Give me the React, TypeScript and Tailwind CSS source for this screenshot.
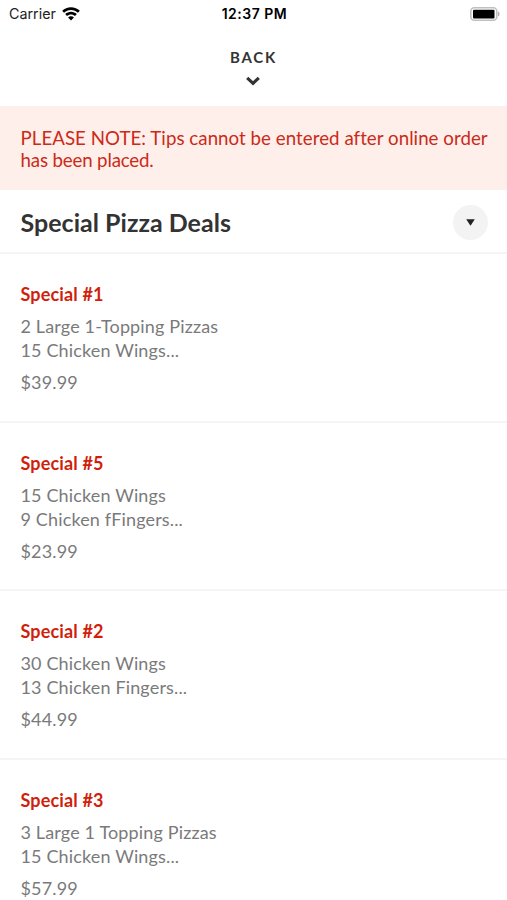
import { ReactNode } from 'react'

interface Deal {
  name: string
  lines: string[]
  price: string
}

const deals: Deal[] = [
  { name: 'Special #1', lines: ['2 Large 1-Topping Pizzas', '15 Chicken Wings...'], price: '$39.99' },
  { name: 'Special #5', lines: ['15 Chicken Wings', '9 Chicken fFingers...'], price: '$23.99' },
  { name: 'Special #2', lines: ['30 Chicken Wings', '13 Chicken Fingers...'], price: '$44.99' },
  { name: 'Special #3', lines: ['3 Large 1 Topping Pizzas', '15 Chicken Wings...'], price: '$57.99' },
]

export default function App() {
  return (
    <div className="h-[900px] w-full overflow-hidden bg-white font-['Lato',sans-serif]">
      <StatusBar />
      <BackHeader />
      <Notice>
        <p className="tracking-[0.04px]">PLEASE NOTE: Tips cannot be entered after online order</p>
        <p className="tracking-[-0.16px]">has been placed.</p>
      </Notice>
      <SectionHeader title="Special Pizza Deals" />
      {deals.map((deal) => (
        <DealRow key={deal.name} deal={deal} />
      ))}
    </div>
  )
}

function StatusBar() {
  return (
    <div className="grid h-[27px] grid-cols-3 items-center pr-[7px] pl-[9px] font-['Inter',sans-serif] text-black">
      <div className="flex items-center gap-[6px] text-[14.3px] text-[#222222]">
        <span>Carrier</span>
        <WifiIcon />
      </div>
      <span className="text-center text-[14px] font-semibold tracking-[0.5px] whitespace-nowrap">12:37 PM</span>
      <div className="flex justify-end">
        <BatteryIcon />
      </div>
    </div>
  )
}

function BackHeader() {
  return (
    <div className="flex h-[80px] flex-col items-center border-b border-[#f8efee] pt-5 text-[#333333]">
      <span className="text-[15px] leading-[20px] font-bold tracking-[1.8px]">BACK</span>
      <svg className="mt-[9px] mr-px" width="14" height="10" viewBox="0 0 14 10" fill="none">
        <path d="M1.2 1.8L7 7.4L12.8 1.8" stroke="currentColor" strokeWidth="3.1" />
      </svg>
    </div>
  )
}

function Notice({ children }: { children: ReactNode }) {
  return (
    <div className="h-[83px] bg-[#ffefeb] pt-5 pl-[20.5px] text-[18.7px] leading-[22px] whitespace-nowrap text-[#cb2a18]">
      {children}
    </div>
  )
}

function SectionHeader({ title }: { title: string }) {
  return (
    <div className="flex h-[64px] items-center justify-between border-b-2 border-[#f5f5f5] pt-[3px] pr-[19px] pl-[20.5px]">
      <h1 className="text-[25px] font-bold tracking-[0.02px] text-[#333333]">{title}</h1>
      <button className="flex size-[35px] items-center justify-center rounded-full bg-[#f3f3f3]">
        <svg width="9" height="7" viewBox="0 0 9 7">
          <path d="M0.2 0.3H8.8L4.5 6.7Z" fill="#222222" />
        </svg>
      </button>
    </div>
  )
}

function DealRow({ deal }: { deal: Deal }) {
  return (
    <div className="h-[168.6px] border-b-2 border-[#f5f5f5] pt-[28px] pl-[20.5px] text-[18px] tracking-[0.15px] text-[#7a7a7a]">
      <h2 className="leading-[25px] font-bold text-[#d11f0c]">{deal.name}</h2>
      <div className="mt-[7px] leading-[24px]">
        {deal.lines.map((line) => (
          <p key={line}>{line}</p>
        ))}
      </div>
      <p className="mt-2 leading-[25px]">{deal.price}</p>
    </div>
  )
}

//-----------Icons--------------------------------------------------------
function WifiIcon() {
  return (
    <svg width="18" height="14" viewBox="0 0 18 14" fill="black">
      <path d="M9 0.3C5.6 0.3 2.5 1.6 0.2 3.8L2 5.7C3.8 4 6.3 2.9 9 2.9S14.2 4 16 5.7L17.8 3.8C15.5 1.6 12.4 0.3 9 0.3Z" />
      <path d="M9 4.8C6.8 4.8 4.8 5.7 3.2 7.1L5 9C6.1 8 7.5 7.4 9 7.4S11.9 8 13 9L14.8 7.1C13.2 5.7 11.2 4.8 9 4.8Z" />
      <path d="M9 9.2C7.9 9.2 6.9 9.6 6.1 10.4L9 13.5L11.9 10.4C11.1 9.6 10.1 9.2 9 9.2Z" />
    </svg>
  )
}

function BatteryIcon() {
  return (
    <svg width="30" height="14" viewBox="0 0 30 14">
      <rect x="0.8" y="0.8" width="26" height="12.4" rx="3.5" fill="none" stroke="#c0c0c0" strokeWidth="1.6" />
      <rect x="3" y="2.7" width="21.5" height="8.8" rx="1" fill="black" />
      <path d="M28 4.5C30 5.3 30 8.7 28 9.5Z" fill="#b0b0b0" />
    </svg>
  )
}
